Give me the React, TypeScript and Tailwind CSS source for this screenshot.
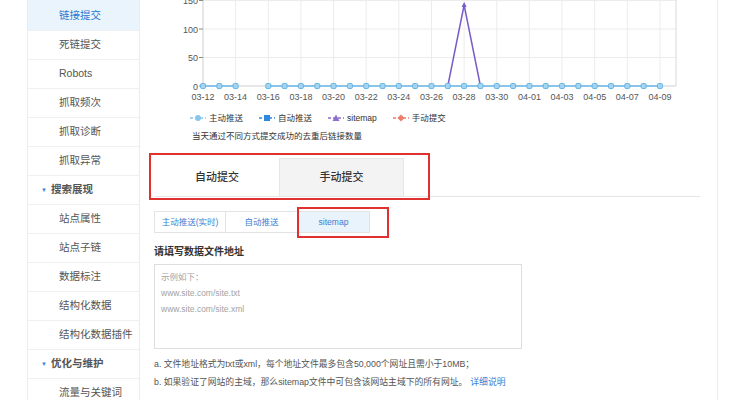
import React from "react";

type NavItem = { label: string; header?: boolean; active?: boolean };

const NAV: NavItem[] = [
  { label: "链接提交", active: true },
  { label: "死链提交" },
  { label: "Robots" },
  { label: "抓取频次" },
  { label: "抓取诊断" },
  { label: "抓取异常" },
  { label: "搜索展现", header: true },
  { label: "站点属性" },
  { label: "站点子链" },
  { label: "数据标注" },
  { label: "结构化数据" },
  { label: "结构化数据插件" },
  { label: "优化与维护", header: true },
  { label: "流量与关键词" },
];

const LABELS = [
  "03-12", "03-14", "03-16", "03-18", "03-20", "03-22", "03-24", "03-26",
  "03-28", "03-30", "04-01", "04-03", "04-05", "04-07", "04-09",
];

const X0 = 33;
const STEP = 16.32;
const xd = (d: number) => X0 + d * STEP;
const yv = (v: number) => 86 - v * 0.57;

function Sidebar() {
  return (
    <div className="w-[113px] shrink-0 border-x border-[#ececec]">
      {NAV.map((item, i) => (
        <div
          key={item.label}
          className={
            "flex items-center border-b border-[#f0f0f0] " +
            (i === 0 ? "h-[31px] pt-[2px] " : "h-[29px] ") +
            (item.active ? "bg-[#eaf4fd] text-[#2b79d2] " : "text-[#555] ") +
            (item.header ? "pl-[13px] font-bold text-[#333]" : "pl-[31px]")
          }
        >
          {item.header && (
            <span className="mr-[4px] text-[6px] text-[#3a86d6]">▼</span>
          )}
          <span className="text-[10.5px]">{item.label}</span>
        </div>
      ))}
    </div>
  );
}

function Chart() {
  const days = Array.from({ length: 29 }, (_, i) => i).filter((d) => d !== 3);
  return (
    <svg width="530" height="106" className="ml-[16px] block">
      {[50, 100, 150].map((v) => (
        <line key={v} x1={X0} x2={506} y1={yv(v)} y2={yv(v)} stroke="#ececec" />
      ))}
      {LABELS.map((_, i) =>
        i === 0 ? null : (
          <line key={i} x1={xd(i * 2)} x2={xd(i * 2)} y1={0} y2={86} stroke="#ececec" />
        )
      )}
      <line x1={506} x2={506} y1={0} y2={86} stroke="#d8d8d8" />
      <line x1={X0} x2={X0} y1={0} y2={86} stroke="#cfcfcf" />
      <line x1={X0} x2={506} y1={86} y2={86} stroke="#cfcfcf" />
      {[0, 50, 100, 150].map((v) => (
        <g key={v}>
          <line x1={29} x2={X0} y1={yv(v)} y2={yv(v)} stroke="#888" />
          <text
            x={28}
            y={yv(v) + 3.5}
            textAnchor="end"
            fontSize="9"
            fill="#555"
            fontFamily="Liberation Sans, sans-serif"
          >
            {v}
          </text>
        </g>
      ))}
      {LABELS.map((l, i) => (
        <text
          key={l}
          x={xd(i * 2)}
          y={100}
          textAnchor="middle"
          fontSize="9"
          fill="#555"
          fontFamily="Liberation Sans, sans-serif"
        >
          {l}
        </text>
      ))}
      <polyline
        points={`${xd(15)},86 ${xd(16)},5 ${xd(17)},86`}
        fill="none"
        stroke="#7a5cc6"
        strokeWidth="1.5"
      />
      <polygon
        points={`${xd(16)},2 ${xd(16) - 2.5},7 ${xd(16) + 2.5},7`}
        fill="#7a5cc6"
      />
      <line x1={xd(0)} x2={xd(2)} y1={86} y2={86} stroke="#6bb8e6" strokeWidth="1.5" />
      <line x1={xd(4)} x2={xd(28)} y1={86} y2={86} stroke="#6bb8e6" strokeWidth="1.5" />
      {days.map((d) => (
        <rect
          key={d}
          x={xd(d) - 2.5}
          y={83.5}
          width={5}
          height={5}
          rx={1.2}
          fill="#a3d4f1"
          stroke="#68b5e4"
          strokeWidth="1"
        />
      ))}
    </svg>
  );
}

function LegendIcon({ color, shape }: { color: string; shape: "circle" | "square" | "triangle" | "diamond" }) {
  return (
    <svg width="16" height="8" className="mr-[3px]">
      <line x1="0" x2="16" y1="4" y2="4" stroke={color} strokeWidth="1.3" strokeDasharray="3 2" />
      {shape === "circle" && <circle cx="8" cy="4" r="3" fill={color} />}
      {shape === "square" && <rect x="5" y="1" width="6" height="6" fill={color} />}
      {shape === "triangle" && <polygon points="8,0.5 4.5,7 11.5,7" fill={color} />}
      {shape === "diamond" && <polygon points="8,0.5 11.5,4 8,7.5 4.5,4" fill={color} />}
    </svg>
  );
}

function Legend() {
  const items = [
    { label: "主动推送", color: "#86c7ec", shape: "circle" as const },
    { label: "自动推送", color: "#2f88e0", shape: "square" as const },
    { label: "sitemap", color: "#8b6fd2", shape: "triangle" as const },
    { label: "手动提交", color: "#ef7d6f", shape: "diamond" as const },
  ];
  return (
    <div className="ml-[36px] mt-[6px] flex h-[12px] items-center gap-[16px] text-[8.5px] text-[#333]">
      {items.map((it) => (
        <div key={it.label} className="flex items-center">
          <LegendIcon color={it.color} shape={it.shape} />
          <span>{it.label}</span>
        </div>
      ))}
    </div>
  );
}

export default function App() {
  return (
    <div className="flex h-[400px] w-[748px] overflow-hidden bg-white font-['Liberation_Sans','Noto_Sans_CJK_SC',sans-serif]">
      <div className="w-[27px] shrink-0" />
      <Sidebar />
      <div className="w-[578px] shrink-0 border-r border-[#ececec] pl-[14px]">
        <Chart />
        <Legend />
        <div className="ml-[38px] mt-[6px] h-[12px] text-[8.5px] leading-[12px] text-[#333]">
          当天通过不同方式提交成功的去重后链接数量
        </div>

        <div className="relative ml-[1px] mt-[16px]">
          <div className="flex h-[39px] w-[545px] border-b border-[#e6e6e6]">
            <div className="flex w-[124px] items-center justify-center bg-white text-[11px] font-medium text-[#333]">
              自动提交
            </div>
            <div className="flex w-[125px] items-center justify-center border border-b-0 border-[#e6e6e6] bg-[#f3f3f3] text-[11px] font-medium text-[#333]">
              手动提交
            </div>
          </div>
          <div className="absolute left-[-6px] top-[-5px] h-[47px] w-[281px] border-2 border-[#e0312f]" />
        </div>

        <div className="relative mt-[14px] flex h-[22px] text-[8.5px] text-[#3a7fd2]">
          <div className="flex w-[72px] items-center justify-center border border-[#e3e3e3]">
            主动推送(实时)
          </div>
          <div className="flex w-[72px] items-center justify-center border border-l-0 border-[#e3e3e3]">
            自动推送
          </div>
          <div className="flex w-[72px] items-center justify-center border border-l-0 border-[#e3e3e3] bg-[#e8f3fc]">
            sitemap
          </div>
          <div className="absolute left-[143px] top-[-4px] h-[31px] w-[92px] border-2 border-[#e0312f]" />
        </div>

        <div className="mt-[13px] h-[12px] text-[10px] font-bold leading-[12px] text-[#333]">
          请填写数据文件地址
        </div>

        <div className="mt-[6px] h-[85px] w-[368px] border border-[#dedede] px-[6px] pt-[4px] text-[8.5px] leading-[16px] text-[#a3a3a3]">
          <div>示例如下：</div>
          <div>www.site.com/site.txt</div>
          <div>www.site.com/site.xml</div>
        </div>

        <div className="mt-[6px] text-[8.8px] leading-[18px] text-[#555]">
          <div>a. 文件地址格式为txt或xml，每个地址文件最多包含50,000个网址且需小于10MB；</div>
          <div>
            b. 如果验证了网站的主域，那么sitemap文件中可包含该网站主域下的所有网址。
            <span className="ml-[3px] text-[#3a80d2]">详细说明</span>
          </div>
        </div>
      </div>
    </div>
  );
}
